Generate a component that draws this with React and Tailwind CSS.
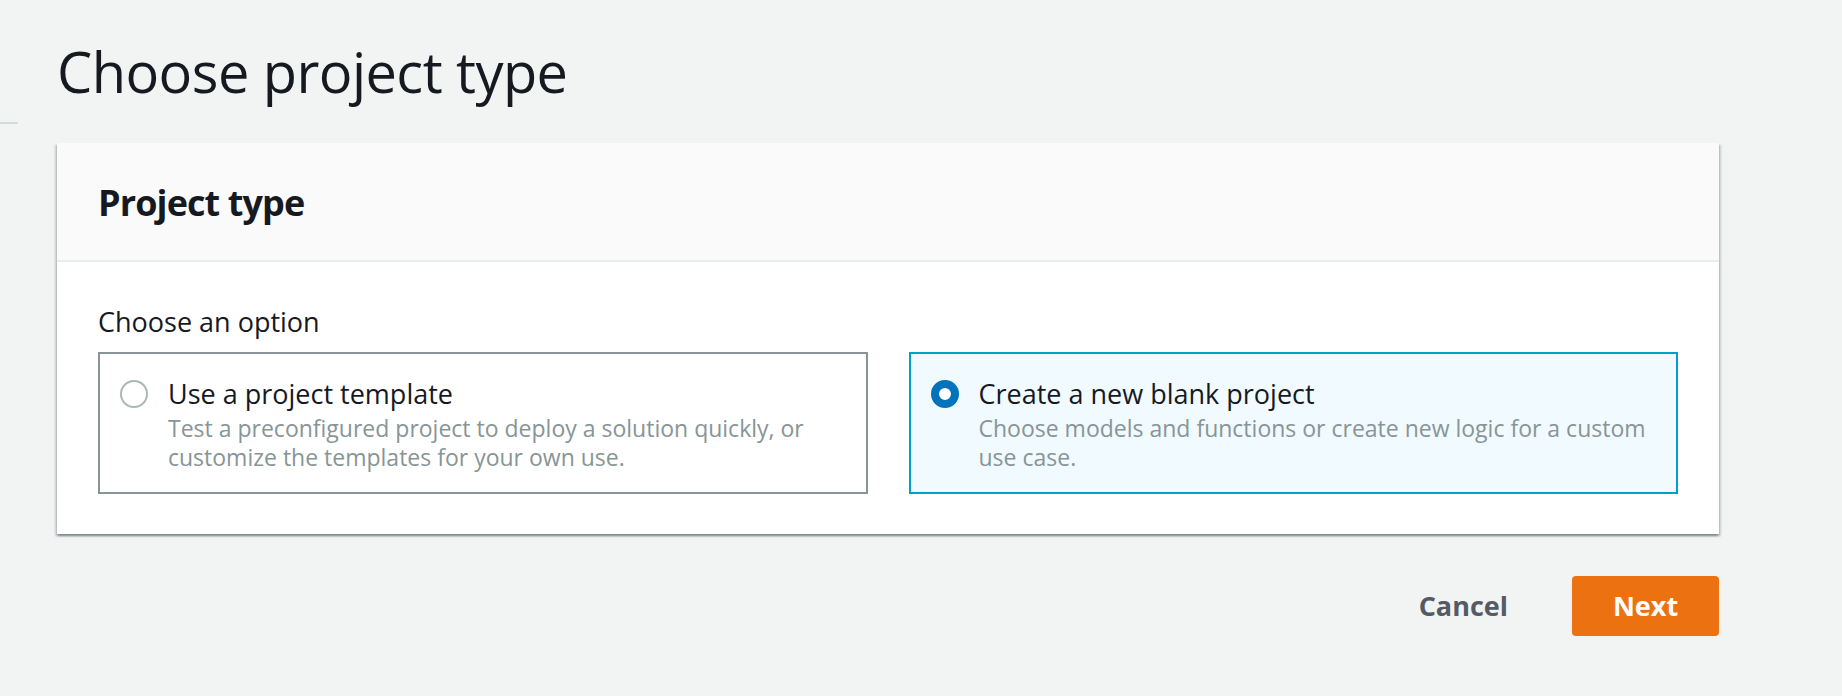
import React, { useState } from 'react';

const options = [
  {
    id: 'template',
    title: 'Use a project template',
    description: 'Test a preconfigured project to deploy a solution quickly, or customize the templates for your own use.',
  },
  {
    id: 'blank',
    title: 'Create a new blank project',
    description: 'Choose models and functions or create new logic for a custom use case.',
  },
];

function RadioCard({ option, checked, onSelect }) {
  return (
    <label
      onClick={onSelect}
      className={`flex items-start gap-[20px] border-2 p-[20px] cursor-pointer ${
        checked ? 'border-[#00a1c9] bg-[#f1faff]' : 'border-[#879596] bg-white'
      }`}
    >
      {checked ? (
        <span className="mt-[6px] w-[28px] h-[28px] shrink-0 rounded-full border-[8px] border-[#0073bb] bg-white" />
      ) : (
        <span className="mt-[6px] w-[28px] h-[28px] shrink-0 rounded-full border-2 border-[#aab7b8] bg-white" />
      )}
      <div className="flex-1">
        <div className="text-[27px] leading-[40px] text-[#16191f]">{option.title}</div>
        <div className="text-[23px] leading-[29px] text-[#879596]">{option.description}</div>
      </div>
    </label>
  );
}

export default function App() {
  const [selected, setSelected] = useState('blank');

  return (
    <div className="min-h-[696px] bg-[#f2f3f3] flex" style={{ fontFamily: '"Open Sans", "Noto Sans", sans-serif' }}>
      <div className="w-[18px] shrink-0">
        <div className="mt-[122px] h-[2px] bg-[#d5dbdb]" />
      </div>
      <div className="flex-1 pl-[39px] pr-[123px]">
        <h1 className="mt-[39px] mb-[40px] text-[56px] leading-[64px] tracking-[-0.01em] text-[#16191f]">
          Choose project type
        </h1>

        <div className="bg-white shadow-[0_2px_2px_0_rgba(0,28,36,0.3),2px_2px_2px_0_rgba(0,28,36,0.15),-2px_2px_2px_0_rgba(0,28,36,0.15)]">
          <div className="bg-[#fafafa] border-b-2 border-[#eaeded] px-[41px] pt-[40px] pb-[37px]">
            <h2 className="text-[36px] leading-[40px] font-bold tracking-[-0.025em] text-[#16191f]">Project type</h2>
          </div>
          <div className="px-[41px] pt-[40px] pb-[40px]">
            <div className="text-[27px] leading-[40px] text-[#16191f] mb-[10px]">Choose an option</div>
            <div className="grid grid-cols-2 gap-[41px]">
              {options.map((opt) => (
                <RadioCard
                  key={opt.id}
                  option={opt}
                  checked={selected === opt.id}
                  onSelect={() => setSelected(opt.id)}
                />
              ))}
            </div>
          </div>
        </div>

        <div className="mt-[42px] flex justify-end items-center">
          <button className="h-[60px] px-[40px] text-[27px] font-bold text-[#545b64]">Cancel</button>
          <button className="ml-[24px] h-[60px] w-[147px] rounded-[4px] bg-[#ec7211] text-[27px] font-bold text-white">
            Next
          </button>
        </div>
      </div>
    </div>
  );
}
